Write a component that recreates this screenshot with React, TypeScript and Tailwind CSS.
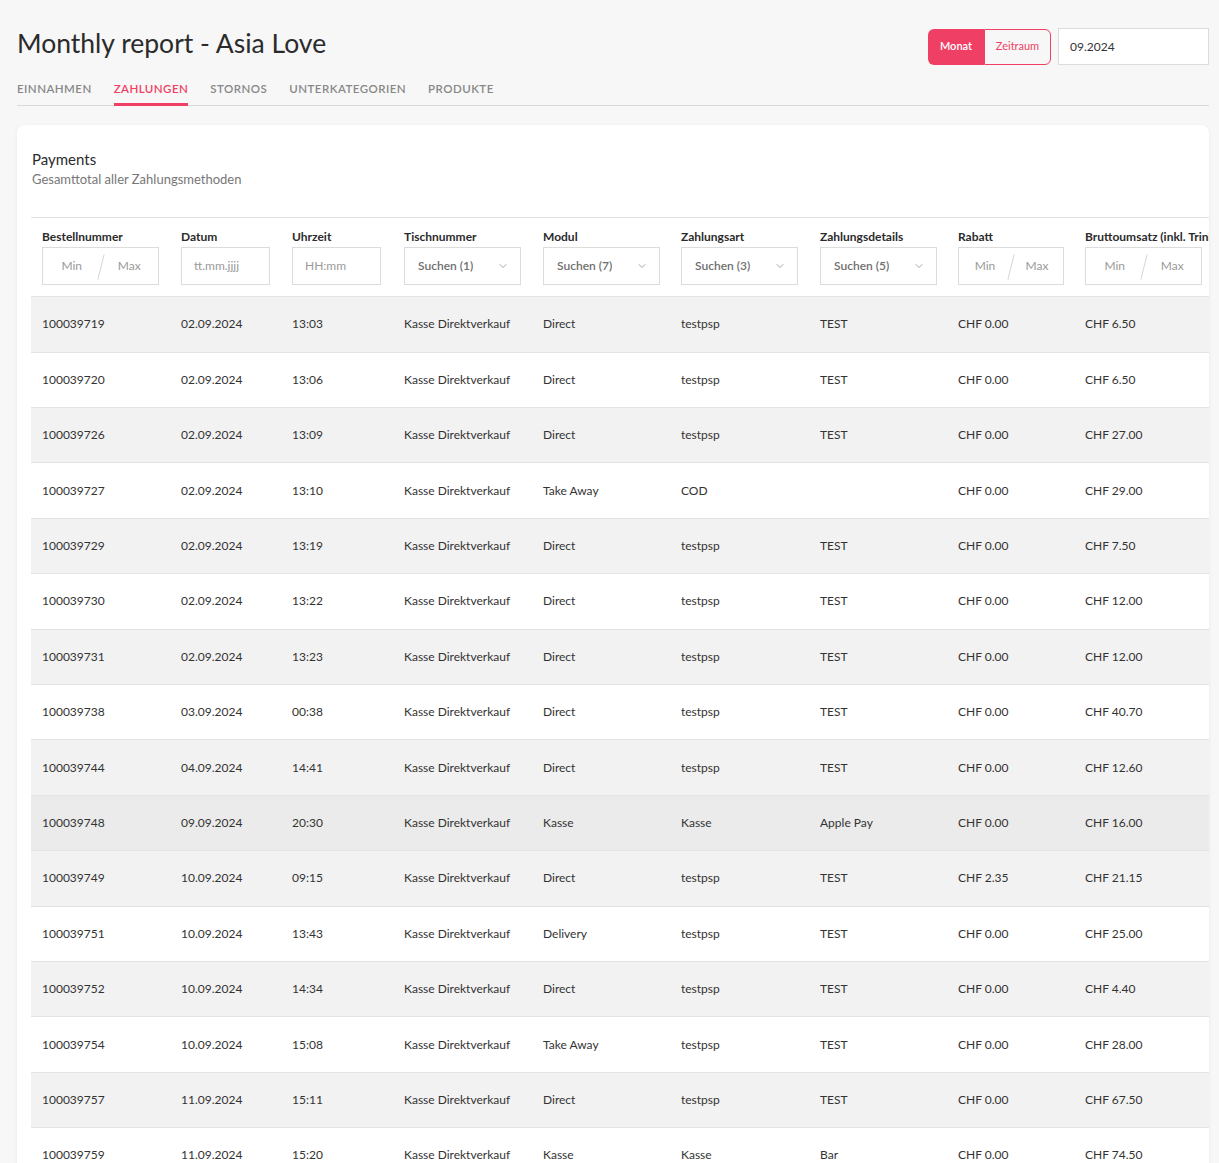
import { ChevronDown } from 'lucide-react';

const cols = [139, 111, 112, 139, 138, 139, 138, 127, 220];

type Row = {
  id: string;
  date: string;
  time: string;
  table: string;
  modul: string;
  art: string;
  details: string;
  rabatt: string;
  brutto: string;
};

const rows: Row[] = [
  { id: '100039719', date: '02.09.2024', time: '13:03', table: 'Kasse Direktverkauf', modul: 'Direct', art: 'testpsp', details: 'TEST', rabatt: 'CHF 0.00', brutto: 'CHF 6.50' },
  { id: '100039720', date: '02.09.2024', time: '13:06', table: 'Kasse Direktverkauf', modul: 'Direct', art: 'testpsp', details: 'TEST', rabatt: 'CHF 0.00', brutto: 'CHF 6.50' },
  { id: '100039726', date: '02.09.2024', time: '13:09', table: 'Kasse Direktverkauf', modul: 'Direct', art: 'testpsp', details: 'TEST', rabatt: 'CHF 0.00', brutto: 'CHF 27.00' },
  { id: '100039727', date: '02.09.2024', time: '13:10', table: 'Kasse Direktverkauf', modul: 'Take Away', art: 'COD', details: '', rabatt: 'CHF 0.00', brutto: 'CHF 29.00' },
  { id: '100039729', date: '02.09.2024', time: '13:19', table: 'Kasse Direktverkauf', modul: 'Direct', art: 'testpsp', details: 'TEST', rabatt: 'CHF 0.00', brutto: 'CHF 7.50' },
  { id: '100039730', date: '02.09.2024', time: '13:22', table: 'Kasse Direktverkauf', modul: 'Direct', art: 'testpsp', details: 'TEST', rabatt: 'CHF 0.00', brutto: 'CHF 12.00' },
  { id: '100039731', date: '02.09.2024', time: '13:23', table: 'Kasse Direktverkauf', modul: 'Direct', art: 'testpsp', details: 'TEST', rabatt: 'CHF 0.00', brutto: 'CHF 12.00' },
  { id: '100039738', date: '03.09.2024', time: '00:38', table: 'Kasse Direktverkauf', modul: 'Direct', art: 'testpsp', details: 'TEST', rabatt: 'CHF 0.00', brutto: 'CHF 40.70' },
  { id: '100039744', date: '04.09.2024', time: '14:41', table: 'Kasse Direktverkauf', modul: 'Direct', art: 'testpsp', details: 'TEST', rabatt: 'CHF 0.00', brutto: 'CHF 12.60' },
  { id: '100039748', date: '09.09.2024', time: '20:30', table: 'Kasse Direktverkauf', modul: 'Kasse', art: 'Kasse', details: 'Apple Pay', rabatt: 'CHF 0.00', brutto: 'CHF 16.00' },
  { id: '100039749', date: '10.09.2024', time: '09:15', table: 'Kasse Direktverkauf', modul: 'Direct', art: 'testpsp', details: 'TEST', rabatt: 'CHF 2.35', brutto: 'CHF 21.15' },
  { id: '100039751', date: '10.09.2024', time: '13:43', table: 'Kasse Direktverkauf', modul: 'Delivery', art: 'testpsp', details: 'TEST', rabatt: 'CHF 0.00', brutto: 'CHF 25.00' },
  { id: '100039752', date: '10.09.2024', time: '14:34', table: 'Kasse Direktverkauf', modul: 'Direct', art: 'testpsp', details: 'TEST', rabatt: 'CHF 0.00', brutto: 'CHF 4.40' },
  { id: '100039754', date: '10.09.2024', time: '15:08', table: 'Kasse Direktverkauf', modul: 'Take Away', art: 'testpsp', details: 'TEST', rabatt: 'CHF 0.00', brutto: 'CHF 28.00' },
  { id: '100039757', date: '11.09.2024', time: '15:11', table: 'Kasse Direktverkauf', modul: 'Direct', art: 'testpsp', details: 'TEST', rabatt: 'CHF 0.00', brutto: 'CHF 67.50' },
  { id: '100039759', date: '11.09.2024', time: '15:20', table: 'Kasse Direktverkauf', modul: 'Kasse', art: 'Kasse', details: 'Bar', rabatt: 'CHF 0.00', brutto: 'CHF 74.50' },
];

const tabs = ['Einnahmen', 'Zahlungen', 'Stornos', 'Unterkategorien', 'Produkte'];

function RangeInput({ width }: { width: number }) {
  return (
    <div
      className="relative flex h-[38px] items-center border border-[#dcdcdc] bg-white text-[12px] text-[#9a9a9a]"
      style={{ width }}
    >
      <span className="flex-1 text-center">Min</span>
      <span className="absolute left-1/2 top-[6px] h-[26px] w-px -translate-x-1/2 rotate-[14deg] bg-[#d6d6d6]" />
      <span className="flex-1 text-center">Max</span>
    </div>
  );
}

function TextInput({ placeholder }: { placeholder: string }) {
  return (
    <div className="flex h-[38px] w-[89px] items-center border border-[#dcdcdc] bg-white px-3 text-[12px] text-[#9a9a9a]">
      {placeholder}
    </div>
  );
}

function SelectInput({ label }: { label: string }) {
  return (
    <div className="flex h-[38px] w-[117px] items-center justify-between border border-[#dcdcdc] bg-white pl-[13px] pr-[11px] text-[12px] font-semibold text-[#707070]">
      <span>{label}</span>
      <ChevronDown size={12} strokeWidth={1.5} className="text-[#8a8a8a]" />
    </div>
  );
}

const headers: { label: string; filter: React.ReactNode }[] = [
  { label: 'Bestellnummer', filter: <RangeInput width={117} /> },
  { label: 'Datum', filter: <TextInput placeholder="tt.mm.jjjj" /> },
  { label: 'Uhrzeit', filter: <TextInput placeholder="HH:mm" /> },
  { label: 'Tischnummer', filter: <SelectInput label="Suchen (1)" /> },
  { label: 'Modul', filter: <SelectInput label="Suchen (7)" /> },
  { label: 'Zahlungsart', filter: <SelectInput label="Suchen (3)" /> },
  { label: 'Zahlungsdetails', filter: <SelectInput label="Suchen (5)" /> },
  { label: 'Rabatt', filter: <RangeInput width={106} /> },
  { label: 'Bruttoumsatz (inkl. Trinkgeld)', filter: <RangeInput width={117} /> },
];

export default function App() {
  return (
    <div className="min-h-screen bg-[#f7f7f7] pl-[17px] pr-[10px] font-['Lato','Noto_Sans',sans-serif] text-[#333]">
      <div className="flex items-start justify-between pt-[28px]">
        <h1 className="-mt-[1px] text-[26.5px] leading-[32px] text-[#2b2b2b]">Monthly report - Asia Love</h1>
        <div className="flex items-center gap-[7px]">
          <div className="flex">
            <button className="h-9 w-[56px] rounded-l-[6px] bg-[#f03f65] text-[11px] font-semibold text-white">Monat</button>
            <button className="h-9 w-[67px] rounded-r-[6px] border border-[#f03f65] bg-[#f7f7f7] text-[11px] text-[#f03f65]">Zeitraum</button>
          </div>
          <div className="flex h-[37px] w-[151px] items-center border border-[#dcdcdc] bg-white px-[11px] text-[12px] text-[#333]">09.2024</div>
        </div>
      </div>

      <div className="mt-[15px] flex gap-[22px] border-b border-[#d9d9d9]">
        {tabs.map((t, i) => (
          <div
            key={t}
            className={
              i === 1
                ? '-mb-px border-b-[3px] border-[#f03f65] pb-[6px] text-[11.5px] font-semibold uppercase tracking-[0.04em] text-[#f03f65]'
                : 'pb-[8px] text-[11.5px] font-semibold uppercase tracking-[0.04em] text-[#888]'
            }
          >
            {t}
          </div>
        ))}
      </div>

      <div className="mt-[19px] overflow-hidden rounded-t-[8px] bg-white shadow-[0_1px_4px_rgba(0,0,0,0.06)]">
        <div className="px-[15px] pt-[24px] pb-[28px]">
          <div className="text-[15px] leading-[20px] text-[#2b2b2b]">Payments</div>
          <div className="pt-[1px] text-[13px] leading-[19px] text-[#777]">Gesamttotal aller Zahlungsmethoden</div>
        </div>
        <div className="ml-[14px] overflow-hidden">
          <div className="w-max">
            <div className="flex border-y border-[#e3e3e3] pt-[12px] pb-[11px]">
              {headers.map((h, i) => (
                <div key={h.label} className="shrink-0 pl-[11px]" style={{ width: cols[i] }}>
                  <div className="whitespace-nowrap pb-[3px] text-[12px] font-bold leading-[14px] text-[#2b2b2b]">{h.label}</div>
                  {h.filter}
                </div>
              ))}
            </div>
            {rows.map((r, idx) => {
              const bg = idx === 9 ? 'bg-[#ebebeb]' : idx % 2 === 0 ? 'bg-[#f2f2f2]' : 'bg-white';
              const cells = [r.id, r.date, r.time, r.table, r.modul, r.art, r.details, r.rabatt, r.brutto];
              return (
                <div key={r.id} className={`flex h-[55.4px] items-center border-b border-[#e3e3e3] ${bg}`}>
                  {cells.map((c, i) => (
                    <div key={i} className="shrink-0 whitespace-nowrap pl-[11px] text-[12px] text-[#333]" style={{ width: cols[i] }}>
                      {c}
                    </div>
                  ))}
                </div>
              );
            })}
          </div>
        </div>
      </div>
    </div>
  );
}
